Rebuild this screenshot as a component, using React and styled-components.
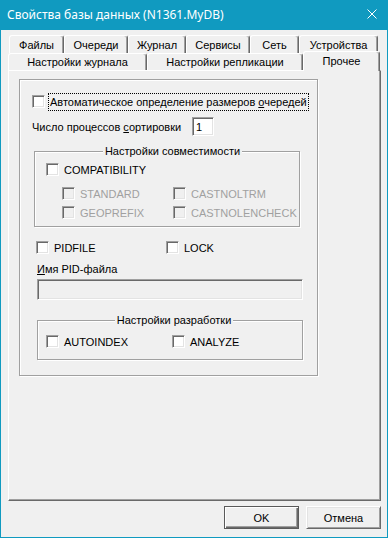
import React from "react";
import styled, { createGlobalStyle } from "styled-components";

const GlobalStyle = createGlobalStyle`
  html, body {
    margin: 0;
    padding: 0;
    background: #f0f0f0;
  }
  body {
    font-family: "Liberation Sans", Arial, sans-serif;
    font-size: 11px;
    color: #000;
  }
`;

const Window = styled.div`
  width: 388px;
  height: 538px;
  display: flex;
  flex-direction: column;
  background: #f0f0f0;
`;

const TitleBar = styled.div`
  height: 30px;
  flex: none;
  display: flex;
  align-items: center;
  justify-content: space-between;
  padding: 0 11px 2px 7px;
  box-sizing: border-box;
  background: #109ac0;
  color: #fff;
  font-family: "Noto Sans", "Open Sans", sans-serif;
  font-size: 12px;
`;

const Body = styled.div`
  flex: 1;
  border: 1px solid #109ac0;
  border-top: none;
  padding: 5px 6px 0 7px;
  display: flex;
  flex-direction: column;
`;

const TabStrip = styled.div`
  display: flex;
  flex-direction: column;
`;

const TabRow = styled.div`
  display: flex;
  height: ${p => p.h}px;
  padding-left: ${p => p.indent || 0}px;
`;

const Tab = styled.div`
  width: ${p => p.w}px;
  height: ${p => (p.selected ? 20 : p.h)}px;
  margin-top: ${p => (p.selected ? -2 : 0)}px;
  flex: none;
  box-sizing: border-box;
  display: flex;
  align-items: center;
  justify-content: center;
  padding-bottom: ${p => (p.selected ? 2 : 0)}px;
  background: #f0f0f0;
  border-top: 1px solid #fff;
  border-left: 1px solid #fff;
  border-right: 1px solid #696969;
  box-shadow: inset -1px 0 #a0a0a0;
  border-radius: 3px 3px 0 0;
  position: ${p => (p.selected ? "relative" : "static")};
  z-index: ${p => (p.selected ? 1 : "auto")};
  white-space: nowrap;
`;

const Panel = styled.div`
  height: 431px;
  box-sizing: border-box;
  border-top: 1px solid #fff;
  border-left: 1px solid #fff;
  border-right: 1px solid #696969;
  border-bottom: 1px solid #696969;
  box-shadow: inset -1px -1px #a0a0a0;
  padding: 8px 0 0 10px;
`;

const Frame = styled.div`
  width: 299px;
  box-sizing: border-box;
  border: 1px solid #a0a0a0;
  box-shadow: inset 1px 1px #fff, 1px 1px #fff;
  padding: 13px 0 15px 12px;
`;

const CheckRow = styled.div`
  display: flex;
  align-items: center;
  height: 17px;
  margin-left: ${p => p.ml || 0}px;
`;

const Box = styled.input.attrs({ type: "checkbox" })`
  appearance: none;
  margin: 0;
  width: 13px;
  height: 13px;
  flex: none;
  box-sizing: border-box;
  background: ${p => (p.disabled ? "#f0f0f0" : "#fff")};
  border-top: 1px solid #a0a0a0;
  border-left: 1px solid #a0a0a0;
  border-right: 1px solid #fff;
  border-bottom: 1px solid #fff;
  box-shadow: inset 1px 1px #696969, inset -1px -1px #e3e3e3;
`;

const Caption = styled.span`
  margin-left: ${p => p.gap || 5}px;
  color: ${p => (p.disabled ? "#a0a0a0" : "#000")};
  white-space: nowrap;
  line-height: 16px;
  outline: ${p => (p.focused ? "1px dotted #000" : "none")};
  padding: 0 ${p => (p.focused ? 1 : 0)}px;
`;

const Key = styled.u`
  text-decoration-thickness: 1px;
  text-underline-offset: 1px;
`;

const SortRow = styled.div`
  display: flex;
  align-items: center;
  margin-top: 7px;
  height: 19px;
`;

const SortLabel = styled.span`
  width: 160px;
  flex: none;
  white-space: nowrap;
`;

const Field = styled.input`
  width: ${p => p.w}px;
  height: ${p => p.h}px;
  margin: ${p => p.mt || 0}px 0 0 ${p => p.ml || 0}px;
  padding: 0 0 0 3px;
  box-sizing: border-box;
  display: block;
  font: inherit;
  color: #000;
  background: ${p => (p.disabled ? "#f0f0f0" : "#fff")};
  border-top: 1px solid #a0a0a0;
  border-left: 1px solid #a0a0a0;
  border-right: 1px solid #fff;
  border-bottom: 1px solid #fff;
  box-shadow: inset 1px 1px #696969, inset -1px -1px #e3e3e3;
  outline: none;
`;

const Group = styled.fieldset`
  width: 266px;
  min-inline-size: 0;
  box-sizing: border-box;
  margin: ${p => p.mt}px 0 0 ${p => p.ml}px;
  padding: ${p => p.pt}px 0 ${p => p.pb}px ${p => p.pl}px;
  border: 1px solid #a0a0a0;
  box-shadow: inset 1px 1px #fff, 1px 1px #fff;
`;

const Legend = styled.legend`
  margin: 0 auto;
  padding: 0 2px;
  line-height: 14px;
  background: #f0f0f0;
`;

const Columns = styled.div`
  display: grid;
  grid-template-columns: ${p => p.col}px auto;
  row-gap: 2px;
  margin: ${p => p.mt || 0}px 0 0 ${p => p.ml || 0}px;
`;

const FieldLabel = styled.div`
  margin: 6px 0 0 5px;
  line-height: 14px;
`;

const Footer = styled.div`
  display: flex;
  justify-content: flex-end;
  gap: 7px;
  margin-top: 5px;
`;

const Button = styled.button`
  width: 75px;
  height: 23px;
  margin: 0;
  padding: 0;
  box-sizing: border-box;
  font: inherit;
  color: #000;
  background: #f0f0f0;
  border: 1px solid ${p => (p.primary ? "#5a5a5a" : "#fff")};
  border-right-color: ${p => (p.primary ? "#5a5a5a" : "#696969")};
  border-bottom-color: ${p => (p.primary ? "#5a5a5a" : "#696969")};
  box-shadow: ${p =>
    p.primary
      ? "inset 1px 1px #fff, inset -1px -1px #696969, inset -2px -2px #a0a0a0"
      : "inset 1px 1px #e3e3e3, inset -1px -1px #a0a0a0"};
`;

const Check = ({ label, disabled, ml, gap, focused }) => (
  <CheckRow ml={ml}>
    <Box disabled={disabled} />
    <Caption disabled={disabled} gap={gap} focused={focused}>
      {label}
    </Caption>
  </CheckRow>
);

const CloseIcon = () => (
  <svg width="10" height="10" viewBox="0 0 10 10">
    <path d="M0.5 0.5 L9.5 9.5 M9.5 0.5 L0.5 9.5" stroke="#fff" strokeWidth="1" />
  </svg>
);

const topTabs = [
  ["Файлы", 55],
  ["Очереди", 64],
  ["Журнал", 58],
  ["Сервисы", 64],
  ["Сеть", 49],
  ["Устройства", 79],
];

const bottomTabs = [
  ["Настройки журнала", 139],
  ["Настройки репликации", 156],
  ["Прочее", 77, true],
];

export default function App() {
  return (
    <Window>
      <GlobalStyle />
      <TitleBar>
        <span>Свойства базы данных (N1361.MyDB)</span>
        <CloseIcon />
      </TitleBar>
      <Body>
        <TabStrip>
          <TabRow h={18} indent={1}>
            {topTabs.map(([name, w]) => (
              <Tab key={name} w={w} h={18}>
                {name}
              </Tab>
            ))}
          </TabRow>
          <TabRow h={17}>
            {bottomTabs.map(([name, w, sel]) => (
              <Tab key={name} w={w} h={17} selected={sel}>
                {name}
              </Tab>
            ))}
          </TabRow>
        </TabStrip>
        <Panel>
          <Frame>
            <Check
              gap={4}
              focused
              label={
                <>
                  Автоматическое определение размеров <Key>о</Key>чередей
                </>
              }
            />
            <SortRow>
              <SortLabel>
                Число процессов <Key>с</Key>ортировки
              </SortLabel>
              <Field w={22} h={19} defaultValue="1" />
            </SortRow>

            <Group mt={8} ml={2} pt={3} pb={5} pl={11}>
              <Legend>Настройки совместимости</Legend>
              <Check label="COMPATIBILITY" />
              <Columns col={111} mt={7} ml={16}>
                <Check label="STANDARD" disabled />
                <Check label="CASTNOLTRM" disabled />
                <Check label="GEOPREFIX" disabled />
                <Check label="CASTNOLENCHECK" disabled />
              </Columns>
            </Group>

            <Columns col={130} mt={12} ml={4}>
              <Check label="PIDFILE" />
              <Check label="LOCK" />
            </Columns>

            <FieldLabel>
              <Key>И</Key>мя PID-файла
            </FieldLabel>
            <Field w={266} h={21} mt={3} ml={5} disabled />

            <Group mt={13} ml={5} pt={6} pb={9} pl={8}>
              <Legend>Настройки разработки</Legend>
              <Columns col={126}>
                <Check label="AUTOINDEX" />
                <Check label="ANALYZE" />
              </Columns>
            </Group>
          </Frame>
        </Panel>
        <Footer>
          <Button primary>OK</Button>
          <Button>Отмена</Button>
        </Footer>
      </Body>
    </Window>
  );
}
